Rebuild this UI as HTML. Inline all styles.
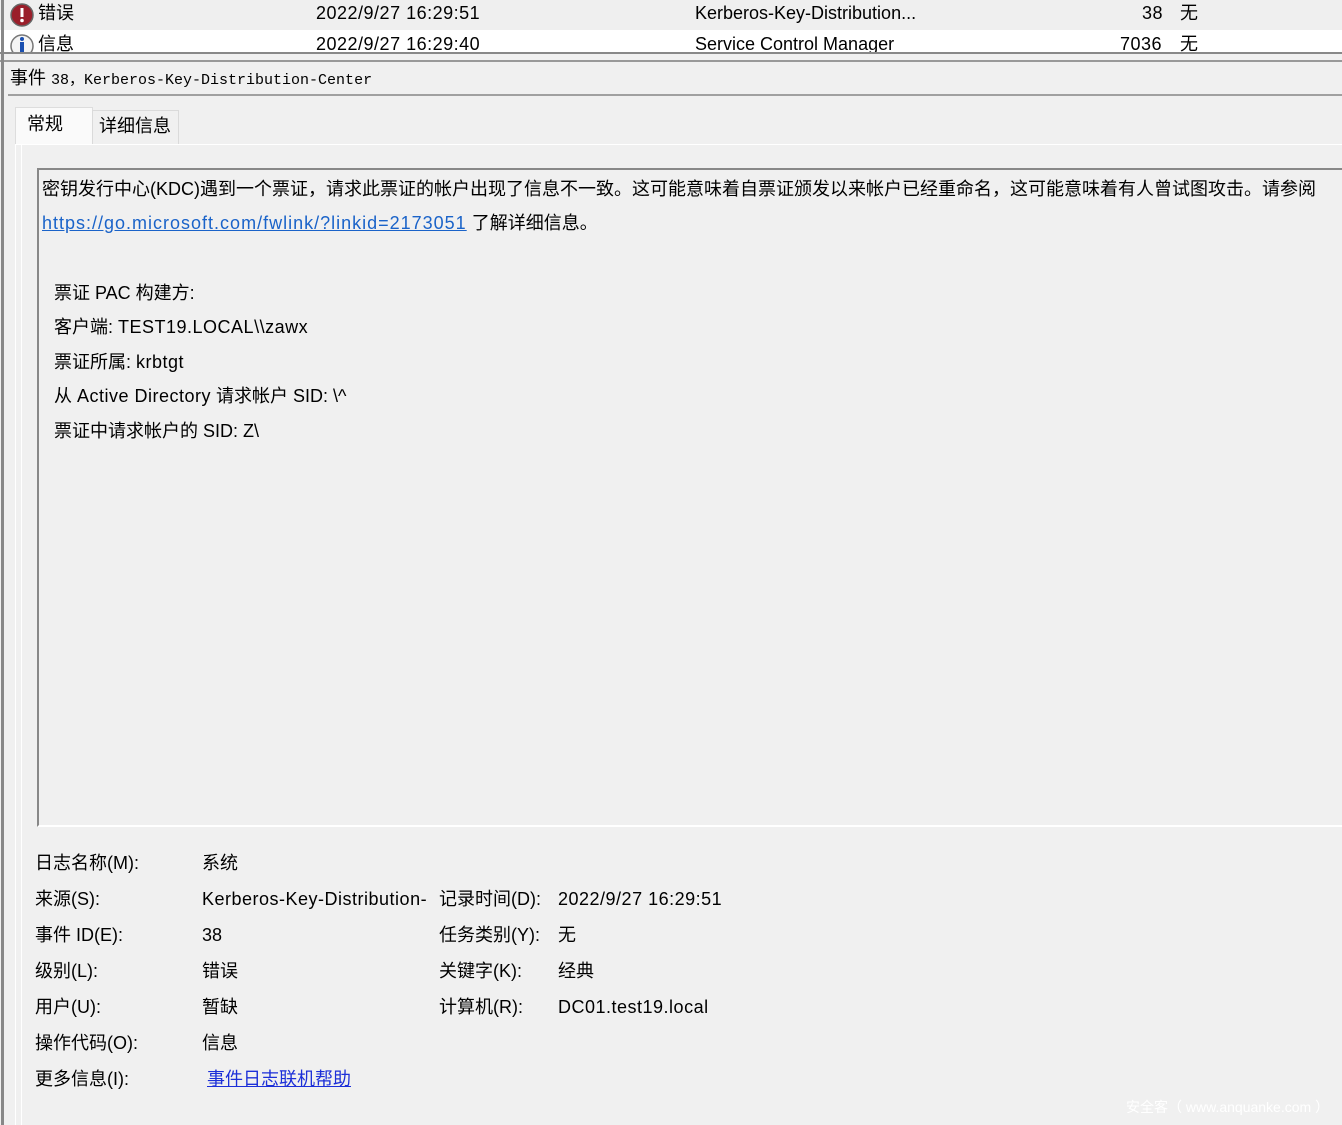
<!DOCTYPE html>
<html><head><meta charset="utf-8"><style>
*{margin:0;padding:0;box-sizing:border-box}
body{width:1342px;height:1125px;overflow:hidden;background:#f0f0f0;font-family:"Liberation Sans","Noto Sans CJK SC",sans-serif;font-size:18px;line-height:22px;color:#000;position:relative}
.a{position:absolute;white-space:nowrap}
.m{font-family:"Liberation Mono","Noto Sans CJK SC",monospace;font-size:15px}
.l{letter-spacing:0.5px}
a{color:#1a63c9;text-decoration:underline;letter-spacing:1px}
.lnk2{color:#1c2fd8;letter-spacing:0}
</style></head><body>
<div class="a" style="left:0;top:0;width:1342px;height:30px;background:#efefef"></div>
<div class="a" style="left:0;top:30px;width:1342px;height:23px;background:#fff;overflow:hidden">
 <svg class="a" style="left:10px;top:4px" width="24" height="24"><circle cx="12" cy="12" r="11" fill="#f4f4f4" stroke="#777" stroke-width="1.5"/><rect x="10" y="8" width="4" height="12" fill="#1a4fb0"/><circle cx="12" cy="5" r="2" fill="#1a4fb0"/></svg>
 <div class="a" style="left:38px;top:3px">信息</div>
 <div class="a l" style="left:316px;top:3px">2022/9/27 16:29:40</div>
 <div class="a" style="left:695px;top:3px">Service Control Manager</div>
 <div class="a l" style="left:1120px;top:3px">7036</div>
 <div class="a" style="left:1180px;top:3px">无</div>
</div>
<svg class="a" style="left:10px;top:3px" width="24" height="24"><circle cx="12" cy="12" r="11" fill="#9a1e2a" stroke="#666" stroke-width="1.5"/><rect x="10.5" y="5" width="3" height="9" fill="#fff"/><circle cx="12" cy="17.5" r="1.8" fill="#fff"/></svg>
<div class="a" style="left:38px;top:2px">错误</div>
<div class="a l" style="left:316px;top:2px">2022/9/27 16:29:51</div>
<div class="a" style="left:695px;top:2px">Kerberos-Key-Distribution...</div>
<div class="a l" style="left:1142px;top:2px">38</div>
<div class="a" style="left:1180px;top:2px">无</div>
<div class="a" style="left:0;top:52px;width:1342px;height:2px;background:#888"></div>
<div class="a" style="left:0;top:60px;width:1342px;height:2px;background:#999"></div>
<div class="a" style="left:1px;top:0;width:3px;height:1125px;background:#888"></div>
<div class="a" style="left:10px;top:67px"><span>事件</span> <span class="m">38，Kerberos-Key-Distribution-Center</span></div>
<div class="a" style="left:8px;top:94px;width:1334px;height:2px;background:#a0a0a0"></div>
<div class="a" style="left:15px;top:107px;width:78px;height:38px;background:#fafafa;border:1px solid #ddd;border-bottom:none"></div>
<div class="a" style="left:27px;top:113px">常规</div>
<div class="a" style="left:92px;top:110px;width:87px;height:34px;border:1px solid #dadada;border-bottom:none"></div>
<div class="a" style="left:99px;top:115px">详细信息</div>
<div class="a" style="left:15px;top:144px;width:1327px;height:981px;border-left:1px solid #fff;border-top:1px solid #fff"></div>
<div class="a" style="left:21px;top:145px;width:1px;height:980px;background:#fff"></div>
<div class="a" style="left:37px;top:168px;width:1305px;height:659px;border-top:2px solid #888;border-left:2px solid #888;border-bottom:2px solid #fff"></div>
<div class="a" style="left:42px;top:178px">密钥发行中心(KDC)遇到一个票证，请求此票证的帐户出现了信息不一致。这可能意味着自票证颁发以来帐户已经重命名，这可能意味着有人曾试图攻击。请参阅</div>
<div class="a" style="left:42px;top:212px"><a>https://go.microsoft.com/fwlink/?linkid=2173051</a> 了解详细信息。</div>
<div class="a" style="left:54px;top:282px">票证 PAC 构建方:</div>
<div class="a" style="left:54px;top:316px">客户端: <span class="l">TEST19.LOCAL\\zawx</span></div>
<div class="a" style="left:54px;top:351px">票证所属: <span class="l">krbtgt</span></div>
<div class="a" style="left:54px;top:385px">从 <span class="l">Active Directory</span> 请求帐户 SID: \^</div>
<div class="a" style="left:54px;top:420px">票证中请求帐户的 SID: Z\</div>
<div class="a" style="left:35px;top:852px">日志名称(M):</div><div class="a" style="left:202px;top:852px">系统</div>
<div class="a" style="left:35px;top:888px">来源(S):</div><div class="a l" style="left:202px;top:888px;width:224px;overflow:hidden">Kerberos-Key-Distribution-Center</div>
<div class="a" style="left:439px;top:888px">记录时间(D):</div><div class="a l" style="left:558px;top:888px">2022/9/27 16:29:51</div>
<div class="a" style="left:35px;top:924px">事件 ID(E):</div><div class="a" style="left:202px;top:924px">38</div>
<div class="a" style="left:439px;top:924px">任务类别(Y):</div><div class="a" style="left:558px;top:924px">无</div>
<div class="a" style="left:35px;top:960px">级别(L):</div><div class="a" style="left:202px;top:960px">错误</div>
<div class="a" style="left:439px;top:960px">关键字(K):</div><div class="a" style="left:558px;top:960px">经典</div>
<div class="a" style="left:35px;top:996px">用户(U):</div><div class="a" style="left:202px;top:996px">暂缺</div>
<div class="a" style="left:439px;top:996px">计算机(R):</div><div class="a l" style="left:558px;top:996px">DC01.test19.local</div>
<div class="a" style="left:35px;top:1032px">操作代码(O):</div><div class="a" style="left:202px;top:1032px">信息</div>
<div class="a" style="left:35px;top:1068px">更多信息(I):</div><div class="a" style="left:207px;top:1068px"><a class="lnk2">事件日志联机帮助</a></div>
<div class="a" style="left:1126px;top:1096px;font-size:14px;color:#fff">安全客（ www.anquanke.com ）</div>
</body></html>
